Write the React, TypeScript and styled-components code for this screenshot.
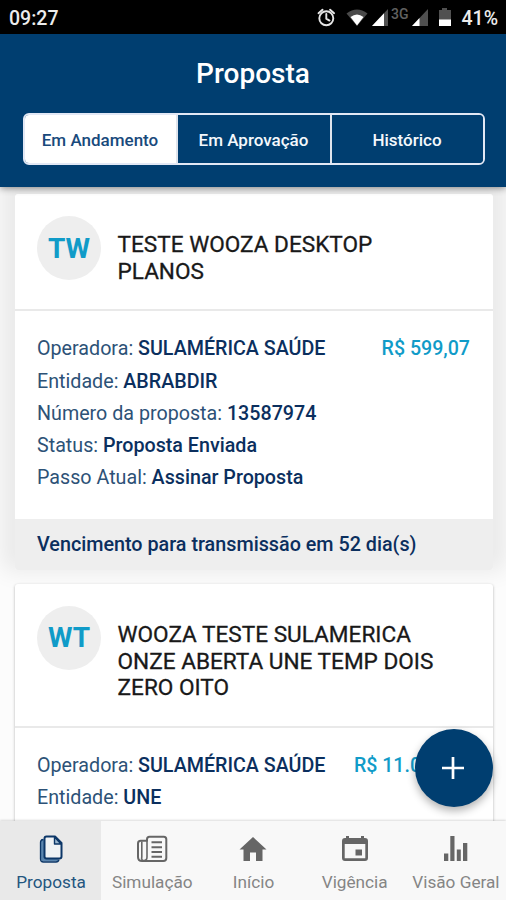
import React from 'react';
import styled, { createGlobalStyle, css } from 'styled-components';

const navy = '#003e70';
const ink = '#0b2f5e';
const cyan = '#109bc8';

const GlobalStyle = createGlobalStyle`
  * { box-sizing: border-box; }
  body { margin: 0; background: #fff; font-family: Roboto, "Liberation Sans", sans-serif; }
`;

const Screen = styled.div`
  position: relative;
  display: flex;
  flex-direction: column;
  width: 506px;
  height: 900px;
  overflow: hidden;
  background: #fcfcfc;
`;

const StatusBar = styled.div`
  display: flex;
  flex: none;
  align-items: center;
  justify-content: space-between;
  height: 34px;
  padding: 2px 8px 0 9px;
  background: #000;
  color: #ececec;
  font-size: 19.5px;
  font-weight: 500;
`;

const StatusIcons = styled.div`
  display: flex;
  align-items: center;
  height: 32px;
`;

const Battery = styled.span`
  margin-left: 8px;
  font-size: 19.5px;
`;

const Header = styled.header`
  position: relative;
  z-index: 1;
  display: flex;
  flex: none;
  flex-direction: column;
  align-items: center;
  height: 153px;
  padding-top: 24px;
  background: ${navy};
  box-shadow: 0 1px 7px rgba(0, 0, 0, 0.45);
`;

const Title = styled.h1`
  margin: 0 0 23px;
  color: #fff;
  font-size: 28px;
  line-height: 32px;
  font-weight: 500;
`;

const Segments = styled.div`
  display: grid;
  grid-template-columns: 153px 154px 151px;
  width: 462px;
  height: 52px;
  margin-left: 1px;
  border: 2px solid #e2e8f5;
  border-radius: 6px;
  overflow: hidden;
`;

const Segment = styled.button<{ $active?: boolean }>`
  padding: 1px 0 0;
  border: 0;
  border-right: 2px solid #dfe4ec;
  background: ${p => (p.$active ? '#fff' : navy)};
  color: ${p => (p.$active ? '#194a7c' : '#f4f8fc')};
  font: 500 17px Roboto, sans-serif;
  &:last-child { border-right: 0; }
`;

const List = styled.main`
  display: flex;
  flex: 1;
  flex-direction: column;
  gap: 14px;
  min-height: 0;
  overflow: hidden;
  padding: 7px 13px 0 15px;
`;

const Card = styled.article<{ $raised?: boolean }>`
  flex: none;
  border-radius: 3px;
  background: #fff;
  box-shadow: ${p => (p.$raised ? '0 -12px 22px 14px rgba(0,0,0,.075)' : '0 1px 3px rgba(0,0,0,.3)')};
  & + & { position: relative; }
`;

const CardHead = styled.div`
  display: flex;
  gap: 16.5px;
  padding: 22px 22px 24px;
  border-bottom: 2px solid #e9e9e9;
`;

const Avatar = styled.div`
  display: flex;
  flex: none;
  align-items: center;
  justify-content: center;
  width: 64px;
  height: 64px;
  border-radius: 50%;
  background: #eee;
  color: ${cyan};
  font-size: 28px;
  font-weight: 700;
`;

const Name = styled.h2`
  margin: 0 0 -0.5px;
  padding: 16px 0 0;
  color: #191919;
  font-size: 22.6px;
  line-height: 26.7px;
  font-weight: 400;
  -webkit-text-stroke: 0.3px #191919;
  white-space: pre-line;
`;

const Details = styled.div`
  display: flex;
  justify-content: space-between;
  height: 208px;
  padding: 22.4px 23px 0 22px;
`;

const Lines = styled.div`
  font-size: 19.7px;
  line-height: 32.3px;
  white-space: nowrap;
`;

const Line = styled.div`
  color: #2d5277;
  b { font-weight: 500; color: ${ink}; }
`;

const Price = styled.div`
  color: ${cyan};
  font-size: 19.6px;
  line-height: 32.3px;
  font-weight: 500;
  white-space: nowrap;
`;

const Due = styled.div`
  height: 51px;
  padding: 0 22px;
  border-radius: 0 0 3px 3px;
  background: #eee;
  color: ${ink};
  font-size: 19.75px;
  line-height: 51px;
  font-weight: 500;
`;

const Fab = styled.button`
  position: absolute;
  z-index: 2;
  right: 13px;
  top: 729px;
  display: flex;
  align-items: center;
  justify-content: center;
  width: 78px;
  height: 78px;
  padding: 0 2px 0 0;
  border: 0;
  border-radius: 50%;
  background: ${navy};
  box-shadow: 0 4px 8px rgba(0, 0, 0, 0.3);
`;

const TabBar = styled.nav`
  position: relative;
  z-index: 3;
  display: grid;
  flex: none;
  grid-template-columns: repeat(5, 1fr);
  height: 79px;
  background: #f8f8f8;
  box-shadow: 0 -1px 2px rgba(0, 0, 0, 0.14);
`;

const Tab = styled.a<{ $active?: boolean }>`
  display: flex;
  flex-direction: column;
  align-items: center;
  padding-top: 12px;
  padding-left: 1px;
  color: #858585;
  font-size: 17.2px;
  line-height: 22px;
  white-space: nowrap;
  svg { margin-bottom: 8px; color: #666; }
  ${p => p.$active && css`
    background: #e9e9e9;
    color: #24567f;
    svg { color: #0c3768; }
  `}
`;

const StatusGlyphs = () => (
  <svg width="136" height="32" viewBox="317 2 136 32" fill="none">
    <g stroke="#e6e6e6" strokeWidth="1.9" strokeLinecap="round">
      <circle cx="326.3" cy="18.3" r="7" />
      <path d="M326.3 14v4.6l3.2 2M318.5 13.2l4-3.5M334.1 13.2l-4-3.5" />
    </g>
    <path d="M346.5 13.5Q357 5.5 367.5 13.5L357 26z" fill="#4a4a4a" />
    <path d="M350.5 17Q357 12 363.5 17L357 25.5z" fill="#fff" />
    <path d="M388 9v17h-16z" fill="#505050" />
    <path d="M384 13.3V26h-12z" fill="#fff" />
    <path d="M428 9v17h-16z" fill="#505050" />
    <path d="M419.5 18V26H412z" fill="#fff" />
    <text x="391" y="18.5" fill="#606060" fontSize="14" fontWeight="500" fontFamily="Roboto">3G</text>
    <path d="M439 10h3V8h5v2h4v10h-12z" fill="#505050" />
    <path d="M439 19.5h12V26h-12z" fill="#fff" />
  </svg>
);

const DocsIcon = () => (
  <svg width="30" height="30" viewBox="0 0 30 30" fill="none" stroke="currentColor" strokeWidth="2" strokeLinejoin="round">
    <path d="M6.5 6v19.5q0 1.5 2 1.5H22" stroke="#5b86af" strokeWidth="3" />
    <path d="M7 6.5q-2.5.5-2.5 3V26q0 3 3 3H20q2.500 0 3-2.500" strokeWidth="1.3" />
    <path d="M10.5 3.5H19l6.500 6.500v13.500q0 2-2 2h-13q-2 0-2-2v-18q0-2 2-2z" fill="#f0f3f5" />
    <path d="M18.5 4v7H25z" fill="#9db8cf" strokeWidth="1.4" />
  </svg>
);

const NewsIcon = () => (
  <svg width="32" height="30" viewBox="0 0 32 30" fill="none" stroke="currentColor" strokeWidth="2" strokeLinejoin="round">
    <path d="M13.5 3.7h14.3q2.500 0 2.500 2.500V25q0 3-3 3H6q-4 0-4-4V10.500q0-2.700 2.700-2.700h6.300V6.200q0-2.500 2.500-2.500z" />
    <path d="M11 7.8V24q0 3.500-3 3.500T5.800 24V8.500" strokeWidth="1.6" />
    <path d="M15.5 9.300h10.500M15.500 14.200h10.500M15.500 19h10.500M15.500 23.700h10.500" />
  </svg>
);

const HomeIcon = () => (
  <svg width="32" height="30" viewBox="0 0 32 30">
    <path d="M16 4 2.5 16.500h4V28h6.500v-8.500h6V28h6.500V16.500h4z" fill="currentColor" />
  </svg>
);

const CalendarIcon = () => (
  <svg width="30" height="30" viewBox="0 0 30 30" fill="currentColor">
    <path d="M6 3h3v2h12V3h3v2h1q3 0 3 3V25q0 3-3 3H5q-3 0-3-3V8q0-3 3-3h1zM4.700 11V25.300h20.600V11z" fillRule="evenodd" />
    <path d="M15.500 16.500h6.500v6h-6.500z" />
  </svg>
);

const ChartIcon = () => (
  <svg width="30" height="30" viewBox="0 0 30 30" fill="currentColor">
    <path d="M3 20.500h4.300V28H3zM9.300 3h4.200v25H9.300zM15.800 16.500h4V28h-4zM22 10h4.300v18H22z" />
  </svg>
);

interface Proposal {
  initials: string;
  name: string;
  price: string;
  fields: [string, string][];
  due?: string;
}

const proposals: Proposal[] = [
  {
    initials: 'TW',
    name: 'TESTE WOOZA DESKTOP\nPLANOS',
    price: 'R$ 599,07',
    fields: [
      ['Operadora', 'SULAMÉRICA SAÚDE'],
      ['Entidade', 'ABRABDIR'],
      ['Número da proposta', '13587974'],
      ['Status', 'Proposta Enviada'],
      ['Passo Atual', 'Assinar Proposta'],
    ],
    due: 'Vencimento para transmissão em 52 dia(s)',
  },
  {
    initials: 'WT',
    name: 'WOOZA TESTE SULAMERICA\nONZE ABERTA UNE TEMP DOIS\nZERO OITO',
    price: 'R$ 11.018,07',
    fields: [
      ['Operadora', 'SULAMÉRICA SAÚDE'],
      ['Entidade', 'UNE'],
      ['Número da proposta', '13587973'],
    ],
  },
];

const tabs = [
  { label: 'Proposta', Icon: DocsIcon },
  { label: 'Simulação', Icon: NewsIcon },
  { label: 'Início', Icon: HomeIcon },
  { label: 'Vigência', Icon: CalendarIcon },
  { label: 'Visão Geral', Icon: ChartIcon },
];

export default function App() {
  return (
    <Screen>
      <GlobalStyle />
      <StatusBar>
        <span>09:27</span>
        <StatusIcons>
          <StatusGlyphs />
          <Battery>41%</Battery>
        </StatusIcons>
      </StatusBar>
      <Header>
        <Title>Proposta</Title>
        <Segments>
          <Segment $active>Em Andamento</Segment>
          <Segment>Em Aprovação</Segment>
          <Segment>Histórico</Segment>
        </Segments>
      </Header>
      <List>
        {proposals.map(p => (
          <Card key={p.initials} $raised={!!p.due}>
            <CardHead>
              <Avatar>{p.initials}</Avatar>
              <Name>{p.name}</Name>
            </CardHead>
            <Details>
              <Lines>
                {p.fields.map(([label, value]) => (
                  <Line key={label}>{label}: <b>{value}</b></Line>
                ))}
              </Lines>
              <Price>{p.price}</Price>
            </Details>
            {p.due && <Due>{p.due}</Due>}
          </Card>
        ))}
      </List>
      <Fab aria-label="Nova proposta">
        <svg width="24" height="24" viewBox="0 0 24 24" stroke="#fff" strokeWidth="2.7">
          <path d="M12 1v22M1 12h22" />
        </svg>
      </Fab>
      <TabBar>
        {tabs.map(({ label, Icon }, i) => (
          <Tab key={label} $active={i === 0}>
            <Icon />
            {label}
          </Tab>
        ))}
      </TabBar>
    </Screen>
  );
}
